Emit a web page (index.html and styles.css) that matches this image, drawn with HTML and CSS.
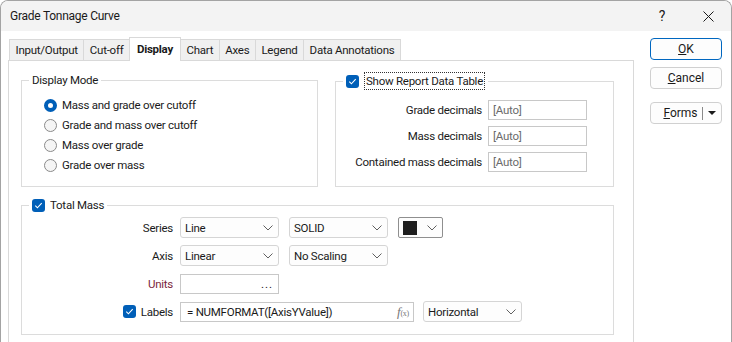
FILE: index.html
```html
<!DOCTYPE html>
<html lang="en">
<head>
    <meta charset="UTF-8">
    <title>Grade Tonnage Curve</title>
    <link rel="stylesheet" href="styles.css">
</head>
<body>
    <div class="window">
        <div class="titlebar">
            <span class="title">Grade Tonnage Curve</span>
            <span class="caption-btn">?</span>
            <span class="caption-btn">
                <svg width="11" height="11" viewBox="0 0 11 11"><path d="M0.5 0.5l10 10M10.5 0.5l-10 10" stroke="#1a1a1a" stroke-width="1"/></svg>
            </span>
        </div>

        <div class="dialog">
            <div class="main">
                <div class="tabs">
                    <span class="tab">Input/Output</span>
                    <span class="tab">Cut-off</span>
                    <span class="tab active">Display</span>
                    <span class="tab">Chart</span>
                    <span class="tab">Axes</span>
                    <span class="tab">Legend</span>
                    <span class="tab">Data Annotations</span>
                </div>

                <div class="tab-panel">
                    <div class="top-row">
                        <fieldset class="group mode-group">
                            <legend>Display Mode</legend>
                            <div class="radio-list">
                                <div class="radio-row"><span class="radio checked"></span>Mass and grade over cutoff</div>
                                <div class="radio-row"><span class="radio"></span>Grade and mass over cutoff</div>
                                <div class="radio-row"><span class="radio"></span>Mass over grade</div>
                                <div class="radio-row"><span class="radio"></span>Grade over mass</div>
                            </div>
                        </fieldset>

                        <fieldset class="group report-group">
                            <legend class="check-legend">
                                <span class="checkbox"><svg width="13" height="13" viewBox="0 0 13 13"><path d="M3.3 6.7l2.1 2.1 4.3-4.6" stroke="#fff" stroke-width="1.1" fill="none"/></svg></span>
                                <span class="focus-text">Show Report Data Table</span>
                            </legend>
                            <div class="decimals">
                                <span class="field-label">Grade decimals</span>
                                <span class="textbox muted">[Auto]</span>
                                <span class="field-label">Mass decimals</span>
                                <span class="textbox muted">[Auto]</span>
                                <span class="field-label">Contained mass decimals</span>
                                <span class="textbox muted">[Auto]</span>
                            </div>
                        </fieldset>
                    </div>

                    <fieldset class="group mass-group">
                        <legend class="check-legend">
                            <span class="checkbox"><svg width="13" height="13" viewBox="0 0 13 13"><path d="M3.3 6.7l2.1 2.1 4.3-4.6" stroke="#fff" stroke-width="1.1" fill="none"/></svg></span>
                            <span>Total Mass</span>
                        </legend>
                        <div class="mass-grid">
                            <span class="field-label">Series</span>
                            <div class="controls">
                                <span class="select">Line<svg class="chev" width="10" height="6" viewBox="0 0 10 6"><path d="M0.5 0.5l4.5 4.5 4.5-4.5" stroke="#606060" fill="none"/></svg></span>
                                <span class="select">SOLID<svg class="chev" width="10" height="6" viewBox="0 0 10 6"><path d="M0.5 0.5l4.5 4.5 4.5-4.5" stroke="#606060" fill="none"/></svg></span>
                                <span class="select color-select"><span class="swatch"></span><svg class="chev" width="10" height="6" viewBox="0 0 10 6"><path d="M0.5 0.5l4.5 4.5 4.5-4.5" stroke="#606060" fill="none"/></svg></span>
                            </div>

                            <span class="field-label">Axis</span>
                            <div class="controls">
                                <span class="select">Linear<svg class="chev" width="10" height="6" viewBox="0 0 10 6"><path d="M0.5 0.5l4.5 4.5 4.5-4.5" stroke="#606060" fill="none"/></svg></span>
                                <span class="select">No Scaling<svg class="chev" width="10" height="6" viewBox="0 0 10 6"><path d="M0.5 0.5l4.5 4.5 4.5-4.5" stroke="#606060" fill="none"/></svg></span>
                            </div>

                            <span class="field-label units">Units</span>
                            <div class="controls">
                                <span class="textbox units-box"><span></span><span class="dots">...</span></span>
                            </div>

                            <span class="field-label labels-label">
                                <span class="checkbox"><svg width="13" height="13" viewBox="0 0 13 13"><path d="M3.3 6.7l2.1 2.1 4.3-4.6" stroke="#fff" stroke-width="1.1" fill="none"/></svg></span>
                                Labels
                            </span>
                            <div class="controls">
                                <span class="textbox expr-box">= NUMFORMAT([AxisYValue])<span class="fx"><i>f</i><small>(x)</small></span></span>
                                <span class="select horiz">Horizontal<svg class="chev" width="10" height="6" viewBox="0 0 10 6"><path d="M0.5 0.5l4.5 4.5 4.5-4.5" stroke="#606060" fill="none"/></svg></span>
                            </div>
                        </div>
                    </fieldset>
                </div>
            </div>

            <div class="side">
                <button class="btn default"><u>O</u>K</button>
                <button class="btn"><u>C</u>ancel</button>
                <button class="btn forms"><span class="forms-text"><u>F</u>orms</span><span class="divider"></span><span class="arrow"></span></button>
            </div>
        </div>
    </div>
</body>
</html>
```

FILE: styles.css
```css
* {
    box-sizing: border-box;
}
body {
    margin: 0;
    font-family: Roboto, "Liberation Sans", Arial, sans-serif;
    font-size: 11.5px;
    letter-spacing: -0.25px;
    color: #1a1a1a;
    background-color: #fff;
}
.window {
    width: 732px;
    height: 342px;
    overflow: hidden;
    border: 1px solid #a3a3a3;
    border-bottom: none;
    border-radius: 8px 8px 0 0;
    background-color: #fff;
}
.titlebar {
    display: flex;
    align-items: center;
    height: 30px;
    padding-left: 9px;
    font-size: 12px;
    background-color: #f3f3f3;
}
.title {
    flex: 1;
}
.caption-btn {
    display: flex;
    align-items: center;
    justify-content: center;
    width: 46px;
    height: 30px;
    font-size: 14px;
}
.dialog {
    display: flex;
    padding-top: 6px;
}
.main {
    width: 626px;
    margin-left: 7px;
}
.tabs {
    display: flex;
    align-items: flex-end;
    padding-left: 1px;
    height: 23px;
}
.tab {
    height: 21px;
    line-height: 20px;
    padding: 0 5.5px;
    margin-right: -1px;
    border: 1px solid #d9d9d9;
    border-bottom: none;
    background-color: #f0f0f0;
}
.tab.active {
    position: relative;
    height: 24px;
    margin-bottom: -1px;
    line-height: 22px;
    padding: 0 7px;
    font-weight: bold;
    background-color: #fff;
}
.tab-panel {
    height: 290px;
    padding: 11px 19px 0 12px;
    border: 1px solid #d9d9d9;
    border-bottom: none;
}
.top-row {
    display: flex;
    gap: 17px;
}
.group {
    margin: 0;
    padding: 0;
    min-width: 0;
    border: 1px solid #dcdcdc;
}
.group legend {
    margin-left: 7px;
    padding: 0 3px;
    line-height: 16px;
}
.check-legend {
    display: flex;
    align-items: center;
    gap: 5px;
}
.mode-group {
    width: 297px;
}
.radio-list {
    padding: 7px 0 11px 22px;
}
.radio-row {
    display: flex;
    align-items: center;
    gap: 5px;
    height: 20px;
}
.radio {
    width: 13px;
    height: 13px;
    border: 1px solid #8a8a8a;
    border-radius: 50%;
    background-color: #f5f5f5;
}
.radio.checked {
    border: 4px solid #005fb8;
    background-color: #fff;
}
.checkbox {
    display: inline-flex;
    width: 13px;
    height: 13px;
    border-radius: 3px;
    background-color: #005fb8;
}
.focus-text {
    padding: 0 1px;
    border: 1px dotted #333;
}
.report-group {
    width: 279px;
}
.decimals {
    display: grid;
    grid-template-columns: auto 99px;
    grid-auto-rows: 20px;
    gap: 6px;
    justify-content: end;
    padding: 10px 26px 0 0;
}
.field-label {
    display: flex;
    align-items: center;
    justify-content: flex-end;
}
.textbox {
    display: flex;
    align-items: center;
    height: 20px;
    padding: 0 4px;
    border: 1px solid #c8c8c8;
    background-color: #fff;
}
.muted {
    color: #6b6b6b;
}
.mass-group {
    margin-top: 10px;
    padding: 4px 0 12px 0;
}
.mass-grid {
    display: grid;
    grid-template-columns: 151px auto;
    grid-auto-rows: 21px;
    column-gap: 7px;
    row-gap: 7px;
}
.controls {
    display: flex;
    align-items: center;
    gap: 10px;
}
.select {
    display: flex;
    align-items: center;
    justify-content: space-between;
    width: 99px;
    height: 21px;
    padding: 0 5px 0 4px;
    border: 1px solid #d5d5d5;
    border-radius: 3px;
    background-color: #fdfdfd;
}
.color-select {
    width: 45px;
    border-color: #8f8f8f;
    border-radius: 2px;
    padding-left: 4px;
}
.swatch {
    width: 14px;
    height: 14px;
    background-color: #1f1f1f;
}
.units {
    color: #7b1f3c;
}
.units-box {
    width: 99px;
    justify-content: space-between;
}
.dots {
    letter-spacing: 1px;
    padding-right: 1px;
}
.labels-label {
    gap: 5px;
}
.expr-box {
    width: 234px;
    justify-content: space-between;
    padding-left: 6px;
}
.fx {
    color: #777;
    font-family: "Liberation Serif", serif;
    font-size: 13px;
}
.fx small {
    font-size: 8px;
}
.controls .horiz {
    margin-left: -1px;
}
.side {
    display: flex;
    flex-direction: column;
    width: 72px;
    margin-left: 16px;
    padding-top: 1px;
}
.btn {
    height: 22px;
    margin-bottom: 7px;
    padding: 0;
    font-family: inherit;
    font-size: 12px;
    color: #1a1a1a;
    border: 1px solid #d0d0d0;
    border-radius: 4px;
    background-color: #fdfdfd;
}
.btn.default {
    border-color: #0067c0;
}
.btn.forms {
    display: flex;
    align-items: center;
    margin-top: 6px;
}
.forms-text {
    flex: 1;
    text-align: center;
    padding-left: 8px;
}
.divider {
    width: 1px;
    height: 13px;
    background-color: #8a8a8a;
}
.arrow {
    width: 0;
    height: 0;
    margin: 0 5px 0 5px;
    border-left: 4px solid transparent;
    border-right: 4px solid transparent;
    border-top: 4px solid #1a1a1a;
}
```
